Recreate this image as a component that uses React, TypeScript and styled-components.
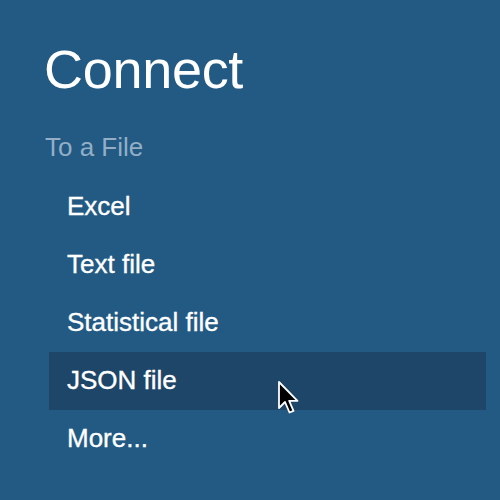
import React from 'react';
import styled, { createGlobalStyle } from 'styled-components';

const GlobalStyle = createGlobalStyle`
  html, body {
    margin: 0;
    padding: 0;
    background: #225a83;
  }
  body {
    font-family: 'Liberation Sans', Arial, sans-serif;
  }
`;

const Page = styled.div`
  width: 500px;
  height: 500px;
  background: #225a83;
  box-sizing: border-box;
  padding: 42px 14px 0 49px;
  overflow: hidden;
`;

const Title = styled.h1`
  margin: 0 0 38px -5px;
  font-size: 54px;
  line-height: 54px;
  font-weight: 400;
  color: #ffffff;
  letter-spacing: -0.3px;
`;

const Subtitle = styled.h2`
  margin: 0 0 18px -4px;
  font-size: 26px;
  line-height: 26px;
  font-weight: 400;
  color: #93aec6;
`;

const List = styled.ul`
  list-style: none;
  margin: 0;
  padding: 0;
`;

const Item = styled.li<{ $active?: boolean }>`
  position: relative;
  height: 58px;
  line-height: 57px;
  padding-left: 18px;
  font-size: 26px;
  color: #ffffff;
  -webkit-text-stroke: 0.35px #ffffff;
  background: ${p => (p.$active ? '#1d4668' : 'transparent')};
`;

const Cursor = styled.svg`
  position: absolute;
  left: 228px;
  top: 29px;
`;

const items = ['Excel', 'Text file', 'Statistical file', 'JSON file', 'More...'];

const App = () => {
  return (
    <>
      <GlobalStyle />
      <Page>
        <Title>Connect</Title>
        <Subtitle>To a File</Subtitle>
        <List>
          {items.map(label => (
            <Item key={label} $active={label === 'JSON file'}>
              {label}
              {label === 'JSON file' && (
                <Cursor width="24" height="36" viewBox="0 0 24 36">
                  <path
                    d="M2 1 L2 27 L8 21 L12.5 31.5 L16.5 29.8 L12.2 19.8 L20.5 19.8 Z"
                    fill="#000"
                    stroke="#fff"
                    strokeWidth="1.8"
                    strokeLinejoin="round"
                  />
                </Cursor>
              )}
            </Item>
          ))}
        </List>
      </Page>
    </>
  );
};

export default App;
